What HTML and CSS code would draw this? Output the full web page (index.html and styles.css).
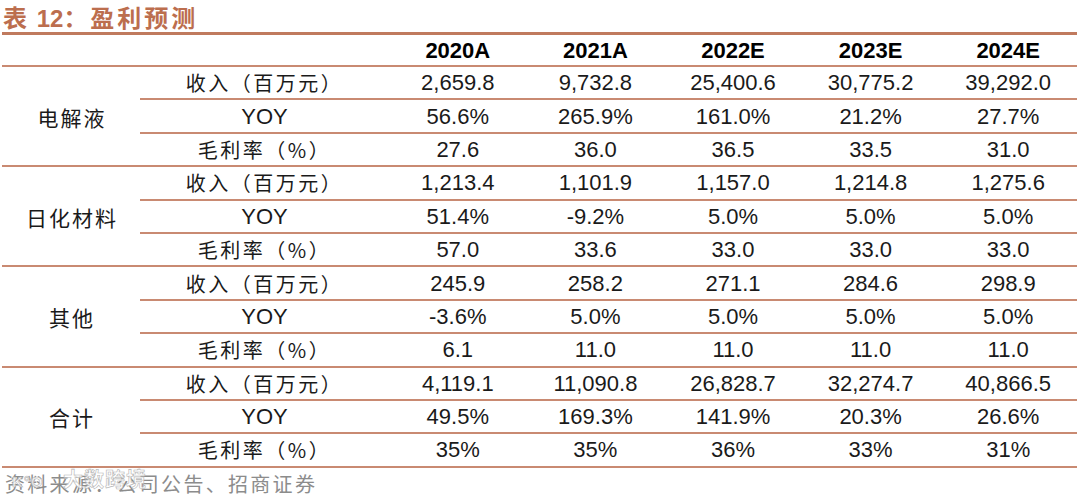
FILE: index.html
```html
<!DOCTYPE html>
<html lang="zh">
<head>
<meta charset="utf-8">
<link rel="stylesheet" href="styles.css">
</head>
<body>
<div class="page">
  <div class="title"><span class="cjk">表</span> 12<span class="cjk">：盈利预测</span></div>
  <table class="tbl">
    <colgroup>
      <col class="c-group"><col class="c-sub">
      <col class="c-num"><col class="c-num"><col class="c-num"><col class="c-num"><col class="c-num">
    </colgroup>
    <thead>
      <tr class="head">
        <th></th><th></th>
        <th>2020A</th><th>2021A</th><th>2022E</th><th>2023E</th><th>2024E</th>
      </tr>
    </thead>
    <tbody>
      <tr class="sub">
        <td class="grp" rowspan="3">电解液</td>
        <td class="lbl">收入（百万元）</td>
        <td>2,659.8</td><td>9,732.8</td><td>25,400.6</td><td>30,775.2</td><td>39,292.0</td>
      </tr>
      <tr class="sub">
        <td class="lbl num">YOY</td>
        <td>56.6%</td><td>265.9%</td><td>161.0%</td><td>21.2%</td><td>27.7%</td>
      </tr>
      <tr class="last">
        <td class="lbl">毛利率（%）</td>
        <td>27.6</td><td>36.0</td><td>36.5</td><td>33.5</td><td>31.0</td>
      </tr>

      <tr class="sub">
        <td class="grp" rowspan="3">日化材料</td>
        <td class="lbl">收入（百万元）</td>
        <td>1,213.4</td><td>1,101.9</td><td>1,157.0</td><td>1,214.8</td><td>1,275.6</td>
      </tr>
      <tr class="sub">
        <td class="lbl num">YOY</td>
        <td>51.4%</td><td>-9.2%</td><td>5.0%</td><td>5.0%</td><td>5.0%</td>
      </tr>
      <tr class="last">
        <td class="lbl">毛利率（%）</td>
        <td>57.0</td><td>33.6</td><td>33.0</td><td>33.0</td><td>33.0</td>
      </tr>

      <tr class="sub">
        <td class="grp" rowspan="3">其他</td>
        <td class="lbl">收入（百万元）</td>
        <td>245.9</td><td>258.2</td><td>271.1</td><td>284.6</td><td>298.9</td>
      </tr>
      <tr class="sub">
        <td class="lbl num">YOY</td>
        <td>-3.6%</td><td>5.0%</td><td>5.0%</td><td>5.0%</td><td>5.0%</td>
      </tr>
      <tr class="last">
        <td class="lbl">毛利率（%）</td>
        <td>6.1</td><td>11.0</td><td>11.0</td><td>11.0</td><td>11.0</td>
      </tr>

      <tr class="sub">
        <td class="grp" rowspan="3">合计</td>
        <td class="lbl">收入（百万元）</td>
        <td>4,119.1</td><td>11,090.8</td><td>26,828.7</td><td>32,274.7</td><td>40,866.5</td>
      </tr>
      <tr class="sub">
        <td class="lbl num">YOY</td>
        <td>49.5%</td><td>169.3%</td><td>141.9%</td><td>20.3%</td><td>26.6%</td>
      </tr>
      <tr class="last">
        <td class="lbl">毛利率（%）</td>
        <td>35%</td><td>35%</td><td>36%</td><td>33%</td><td>31%</td>
      </tr>
    </tbody>
  </table>
  <div class="source">
    资料来源：公司公告、招商证券
    <span class="watermark"><span class="wm-logo">K°O</span> 大数跨境</span>
  </div>
</div>
</body>
</html>
```

FILE: styles.css
```css
html, body {
  margin: 0;
  padding: 0;
  background: #ffffff;
}

.page {
  width: 1080px;
  height: 497px;
  padding-left: 2px;
  box-sizing: border-box;
  font-family: "Liberation Sans", Arial, "Noto Sans CJK SC", sans-serif;
  color: #111111;
  overflow: hidden;
}

.title {
  height: 32px;
  line-height: 34px;
  padding-left: 1px;
  font-size: 24px;
  font-weight: bold;
  color: #bc6e4e;
  white-space: nowrap;
}

.title .cjk {
  font-family: "Noto Sans CJK SC", sans-serif;
  font-weight: bold;
  letter-spacing: 3px;
}

.tbl {
  width: 1075px;
  border-collapse: collapse;
  table-layout: fixed;
  border-top: 3px solid #c07a5e;
}

.c-group { width: 138px; }
.c-sub { width: 249px; }
.c-num { width: 137.6px; }

.tbl th,
.tbl td {
  padding: 0;
  text-align: center;
  vertical-align: middle;
  white-space: nowrap;
  line-height: 24px;
}

.head th {
  height: 29px;
  font-size: 22px;
  font-weight: bold;
  color: #000000;
  border-bottom: 2px solid #c98a72;
  padding-top: 1px;
}

.tbl td {
  height: 30.4px;
  font-size: 22px;
  color: #1a1a1a;
  padding-top: 1px;
}

.sub td {
  border-bottom: 2px solid #c98a72;
}

.last td {
  border-bottom: 2px solid #c98a72;
}

.tbl td.grp {
  font-family: "Noto Sans CJK SC", sans-serif;
  font-size: 21px;
  letter-spacing: 2px;
  border-bottom: 2px solid #c98a72;
  padding-left: 2px;
}

.tbl td.lbl {
  font-family: "Noto Sans CJK SC", sans-serif;
  font-size: 20px;
  letter-spacing: 2.5px;
}

.tbl td.lbl.num {
  font-family: "Liberation Sans", Arial, sans-serif;
  font-size: 22px;
  letter-spacing: 0;
}

.source {
  position: relative;
  margin-top: 3px;
  padding-left: 3px;
  font-family: "Noto Sans CJK SC", sans-serif;
  font-size: 20px;
  letter-spacing: 2.3px;
  color: #8c8c8c;
  white-space: nowrap;
  line-height: 26px;
}

.watermark {
  position: absolute;
  left: 10px;
  top: -5px;
  font-size: 20px;
  letter-spacing: 1px;
  color: rgba(255, 255, 255, 0.75);
  -webkit-text-stroke: 0.6px #b5b5b5;
  font-weight: bold;
}

.wm-logo {
  font-family: "Liberation Sans", Arial, sans-serif;
  font-size: 15px;
  margin-right: 14px;
}
```
